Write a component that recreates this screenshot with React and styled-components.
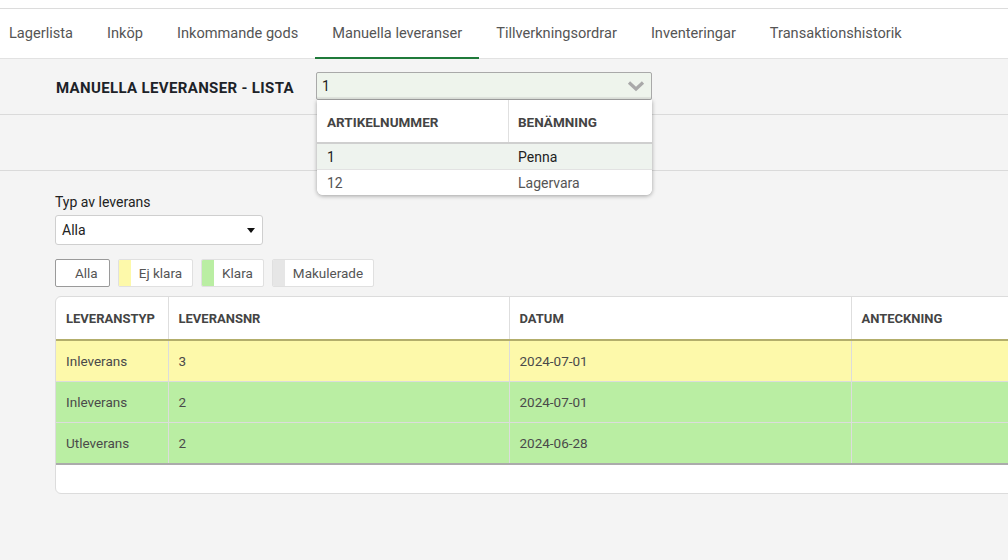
import React from "react";
import styled, { createGlobalStyle } from "styled-components";

const Global = createGlobalStyle`
  html, body { margin: 0; padding: 0; }
  body {
    background: #f4f4f4;
    font-family: Roboto, "Liberation Sans", sans-serif;
    color: #333;
    overflow: hidden;
    width: 1008px;
    height: 560px;
  }
`;

const Page = styled.div`
  width: 1008px;
  min-height: 560px;
  background: #f4f4f4;
`;

const Header = styled.header`
  background: #fff;
  padding-top: 8px;
`;

const Nav = styled.nav`
  display: flex;
  border-top: 1px solid #dcdcdc;
  border-bottom: 1px solid #e2e2e2;
  height: 49px;
`;

const Tab = styled.a`
  display: flex;
  align-items: center;
  padding: 0 17px;
  font-size: 14.6px;
  color: #555;
  text-decoration: none;
  border-bottom: 2px solid ${(p) => (p.$active ? "#1f7a3a" : "transparent")};
  margin-bottom: -1px;
  &:first-child { padding-left: 9px; }
`;

const TitleBar = styled.div`
  display: flex;
  align-items: center;
  height: 55px;
  padding-left: 56px;
  border-bottom: 1px solid #dadada;
`;

const Title = styled.h1`
  margin: 0;
  width: 260px;
  font-size: 15px;
  font-weight: 700;
  letter-spacing: 0.35px;
  color: #1c2228;
  padding-top: 2px;
`;

const ComboWrap = styled.div`
  position: relative;
  width: 336px;
  margin-top: -1px;
`;

const Combo = styled.div`
  display: flex;
  align-items: center;
  justify-content: space-between;
  height: 26px;
  padding: 0 6px 0 5px;
  background: #eef4ec;
  border: 1px solid #a9a9a9;
  border-radius: 2px;
  box-shadow: inset 0 -2px 0 #e2e6e0;
  font-size: 14px;
  color: #222;
`;

const DropList = styled.div`
  position: absolute;
  top: 28px;
  left: 1px;
  right: 0;
  background: #fff;
  border-radius: 0 0 6px 6px;
  box-shadow: 0 1px 4px rgba(0, 0, 0, 0.35);
  z-index: 10;
  overflow: hidden;
`;

const DropHead = styled.div`
  display: grid;
  grid-template-columns: 191px 1fr;
  height: 42px;
  border-bottom: 2px solid #cfcfcf;
`;

const DropHeadCell = styled.div`
  display: flex;
  align-items: center;
  padding-left: ${(p) => (p.$first ? "10px" : "9px")};
  padding-top: 1px;
  font-size: 13.5px;
  font-weight: 700;
  color: #444;
  border-left: ${(p) => (p.$first ? "none" : "1px solid #e0e0e0")};
`;

const DropRow = styled.div`
  display: grid;
  grid-template-columns: 191px 1fr;
  height: 25px;
  align-items: center;
  font-size: 14px;
  color: ${(p) => (p.$selected ? "#222" : "#555")};
  background: ${(p) => (p.$selected ? "#eef3ee" : "#fff")};
  border-top: ${(p) => (p.$selected ? "none" : "1px solid #e2e2e2")};
`;

const DropCell = styled.div`
  padding-left: 10px;
`;

const Band = styled.div`
  height: 55px;
  border-bottom: 1px solid #dadada;
`;

const Content = styled.main`
  padding: 23px 0 0 55px;
`;

const Label = styled.div`
  font-size: 14px;
  color: #222;
  line-height: 17px;
`;

const Select = styled.div`
  margin-top: 4px;
  width: 193px;
  height: 28px;
  display: flex;
  align-items: center;
  justify-content: space-between;
  padding: 0 7px 0 6px;
  background: #fff;
  border: 1px solid #cfcfcf;
  border-radius: 3px;
  font-size: 14px;
  color: #222;
`;

const Caret = styled.span`
  width: 0;
  height: 0;
  border-left: 4px solid transparent;
  border-right: 4px solid transparent;
  border-top: 5px solid #111;
`;

const Legend = styled.div`
  display: flex;
  gap: 8px;
  margin-top: 14px;
`;

const LegendBtn = styled.button`
  display: flex;
  align-items: stretch;
  height: 28px;
  padding: 0;
  background: #fff;
  border: 1px solid ${(p) => (p.$active ? "#9a9a9a" : "#e0e0e0")};
  border-radius: 2px;
  font-family: inherit;
  font-size: 13.5px;
  color: #555;
  overflow: hidden;
`;

const Swatch = styled.span`
  width: 12px;
  background: ${(p) => p.$color};
`;

const BtnText = styled.span`
  display: flex;
  align-items: center;
  padding: 0 ${(p) => p.$pr}px 0 ${(p) => p.$pl}px;
`;

const Card = styled.div`
  margin-top: 9px;
  width: 1150px;
  background: #fff;
  border: 1px solid #dcdcdc;
  border-radius: 6px;
  overflow: hidden;
`;

const Table = styled.table`
  border-collapse: collapse;
  width: 100%;
  table-layout: fixed;
`;

const Th = styled.th`
  height: 42px;
  padding: 0 10px;
  text-align: left;
  font-size: 13px;
  font-weight: 700;
  color: #444;
  border-left: 1px solid #dedede;
  &:first-child { border-left: none; }
`;

const rowColors = { yellow: "#fdf9aa", green: "#baeea3" };

const Tr = styled.tr`
  background: ${(p) => rowColors[p.$status]};
  border-top: ${(p) => (p.$first ? "2px solid #b3ae6b" : "1px solid #dcdcdc")};
  border-bottom: ${(p) => (p.$last ? "2px solid #ababab" : "none")};
`;

const Td = styled.td`
  height: 40px;
  padding: 0 10px;
  font-size: 13.5px;
  color: #4a4a4a;
  border-left: 1px solid #dcdcdc;
  &:first-child { border-left: none; }
`;

const CardFooter = styled.div`
  height: 28px;
`;

const Chevron = () => (
  <svg width="18" height="12" viewBox="0 0 18 12">
    <path d="M2 2.5 L9 9 L16 2.5" fill="none" stroke="#a9a9a9" strokeWidth="3.2" />
  </svg>
);

const tabs = [
  "Lagerlista",
  "Inköp",
  "Inkommande gods",
  "Manuella leveranser",
  "Tillverkningsordrar",
  "Inventeringar",
  "Transaktionshistorik",
];

const rows = [
  { typ: "Inleverans", nr: "3", datum: "2024-07-01", status: "yellow" },
  { typ: "Inleverans", nr: "2", datum: "2024-07-01", status: "green" },
  { typ: "Utleverans", nr: "2", datum: "2024-06-28", status: "green" },
];

export default function App() {
  return (
    <Page>
      <Global />
      <Header>
        <Nav>
          {tabs.map((t) => (
            <Tab key={t} $active={t === "Manuella leveranser"}>
              {t}
            </Tab>
          ))}
        </Nav>
      </Header>
      <TitleBar>
        <Title>MANUELLA LEVERANSER - LISTA</Title>
        <ComboWrap>
          <Combo>
            <span>1</span>
            <Chevron />
          </Combo>
          <DropList>
            <DropHead>
              <DropHeadCell $first>ARTIKELNUMMER</DropHeadCell>
              <DropHeadCell>BENÄMNING</DropHeadCell>
            </DropHead>
            <DropRow $selected>
              <DropCell>1</DropCell>
              <DropCell>Penna</DropCell>
            </DropRow>
            <DropRow>
              <DropCell>12</DropCell>
              <DropCell>Lagervara</DropCell>
            </DropRow>
          </DropList>
        </ComboWrap>
      </TitleBar>
      <Band />
      <Content>
        <Label>Typ av leverans</Label>
        <Select>
          <span>Alla</span>
          <Caret />
        </Select>
        <Legend>
          <LegendBtn $active>
            <BtnText $pl={19} $pr={11}>Alla</BtnText>
          </LegendBtn>
          <LegendBtn>
            <Swatch $color="#fdf9aa" />
            <BtnText $pl={8} $pr={10}>Ej klara</BtnText>
          </LegendBtn>
          <LegendBtn>
            <Swatch $color="#baeea3" />
            <BtnText $pl={8} $pr={10}>Klara</BtnText>
          </LegendBtn>
          <LegendBtn>
            <Swatch $color="#e6e6e6" />
            <BtnText $pl={8} $pr={10}>Makulerade</BtnText>
          </LegendBtn>
        </Legend>
        <Card>
          <Table>
            <colgroup>
              <col style={{ width: 112 }} />
              <col style={{ width: 341 }} />
              <col style={{ width: 342 }} />
              <col />
            </colgroup>
            <thead>
              <tr>
                <Th>LEVERANSTYP</Th>
                <Th>LEVERANSNR</Th>
                <Th>DATUM</Th>
                <Th>ANTECKNING</Th>
              </tr>
            </thead>
            <tbody>
              {rows.map((r, i) => (
                <Tr key={i} $status={r.status} $first={i === 0} $last={i === rows.length - 1}>
                  <Td>{r.typ}</Td>
                  <Td>{r.nr}</Td>
                  <Td>{r.datum}</Td>
                  <Td />
                </Tr>
              ))}
            </tbody>
          </Table>
          <CardFooter />
        </Card>
      </Content>
    </Page>
  );
}
